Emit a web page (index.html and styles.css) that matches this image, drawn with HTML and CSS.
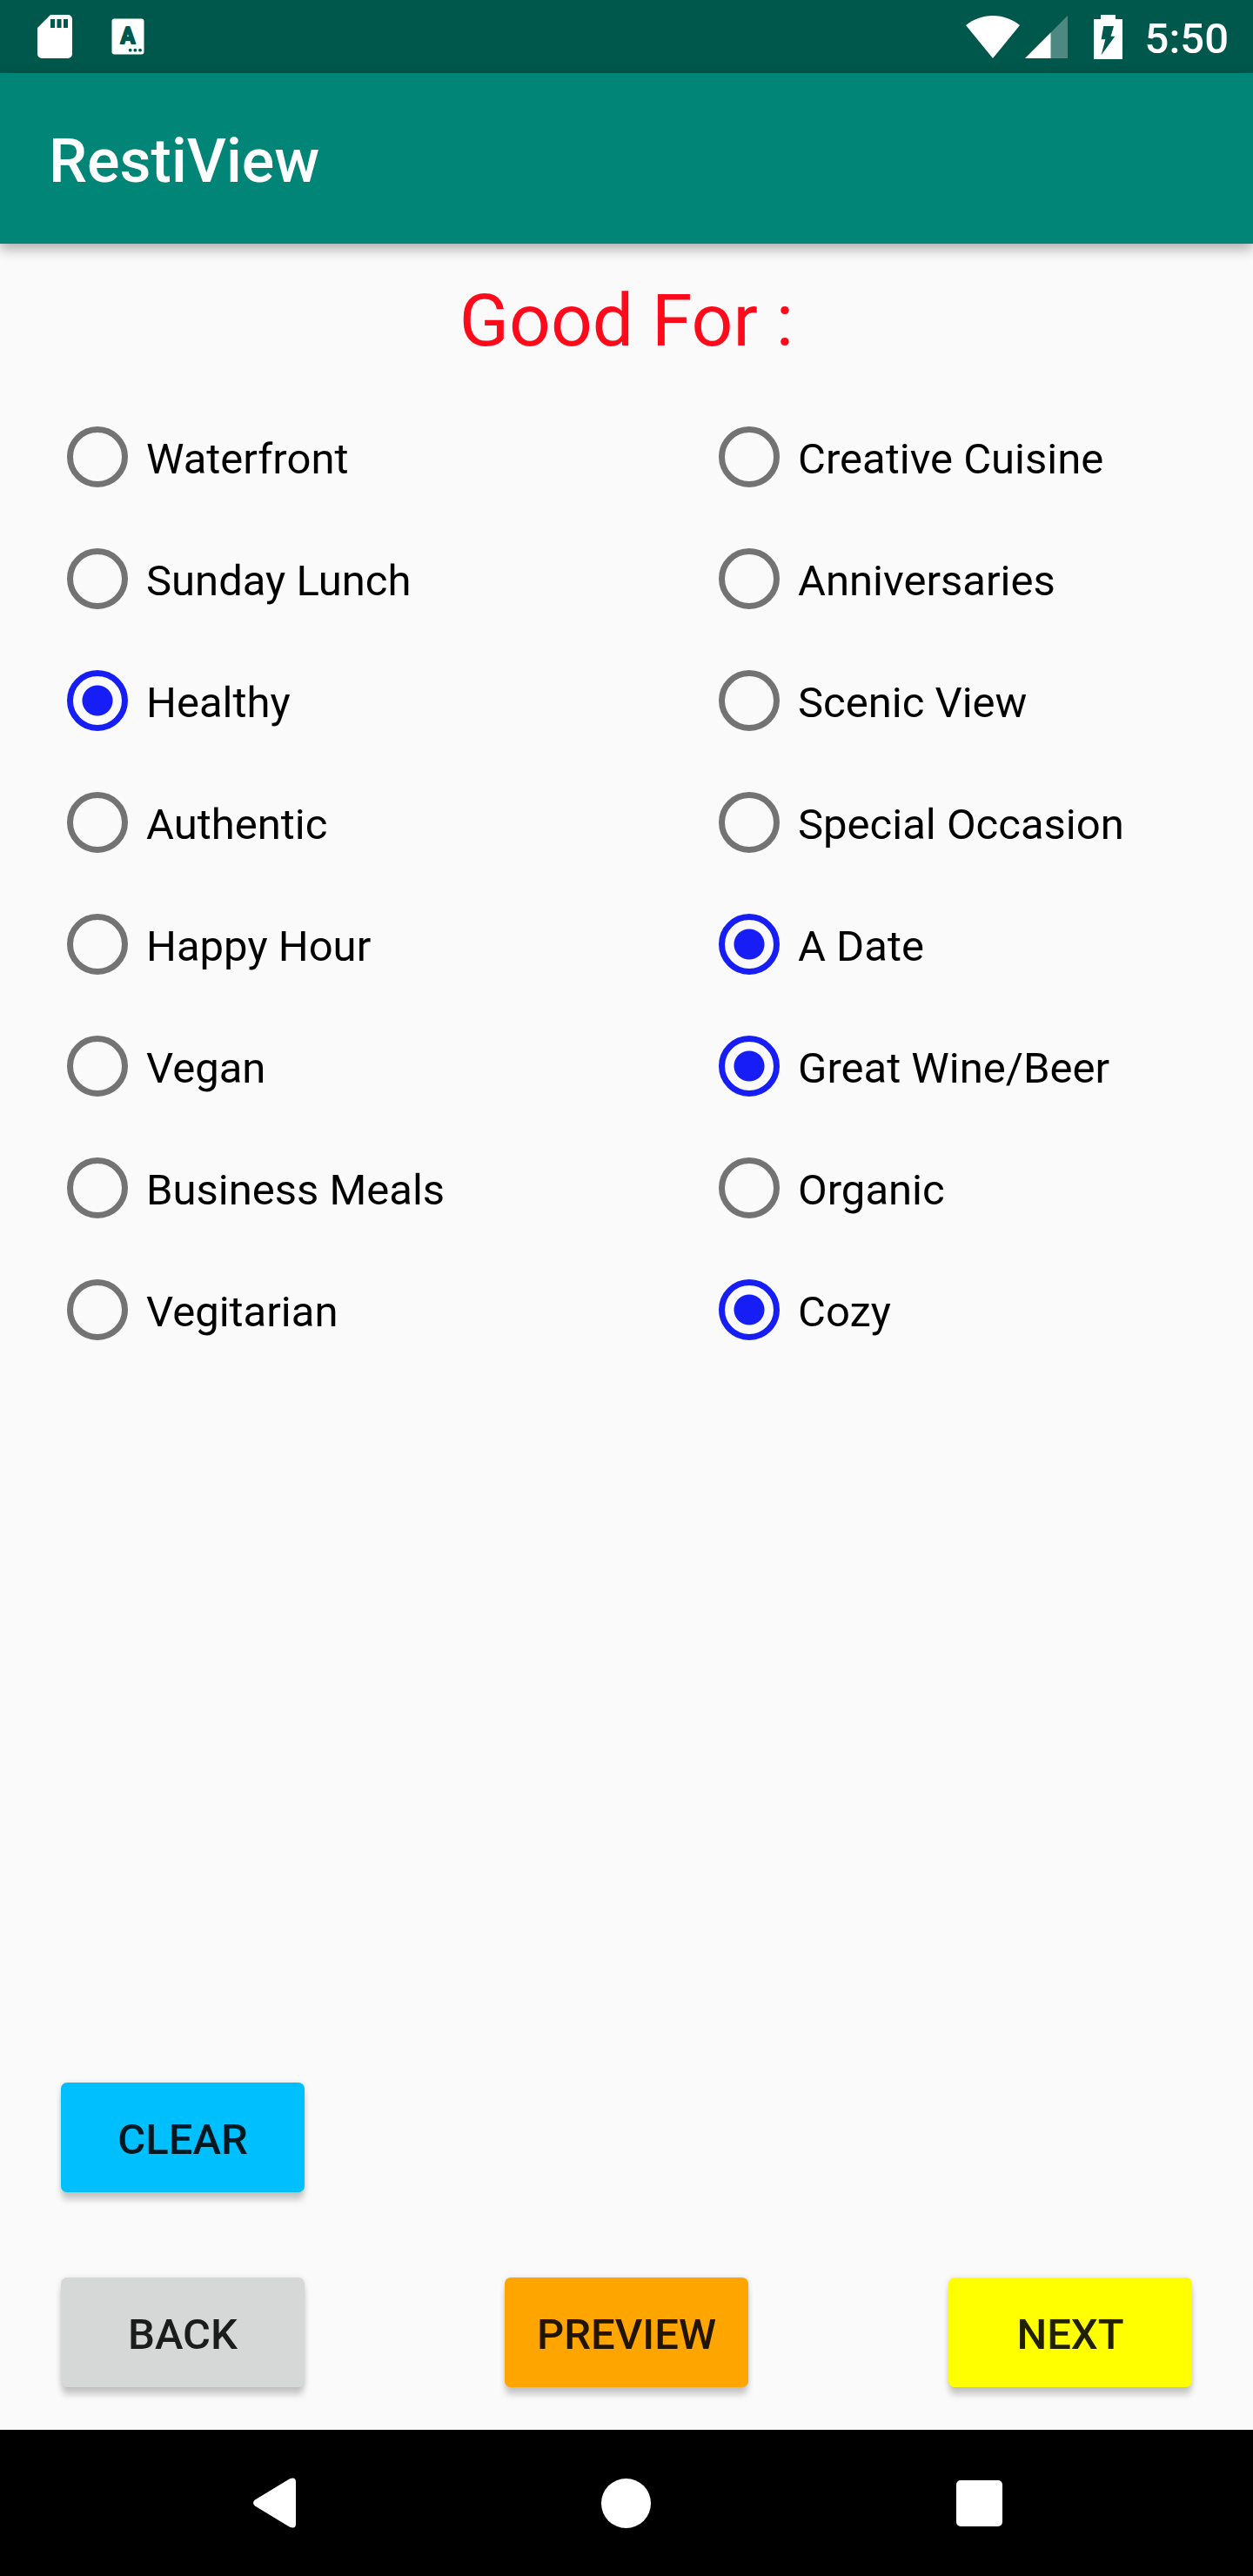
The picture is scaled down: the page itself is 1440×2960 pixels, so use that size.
FILE: index.html
```html
<!DOCTYPE html>
<html lang="en">
<head>
  <meta charset="UTF-8">
  <title>RestiView</title>
  <link rel="stylesheet" href="styles.css">
</head>
<body>
  <div class="status-bar">
    <div class="status-left">
      <svg class="icon-sd" width="40" height="50" viewBox="0 0 40 50">
        <path fill="#fff" fill-rule="evenodd" d="M15 0H35a5 5 0 0 1 5 5V45a5 5 0 0 1-5 5H5a5 5 0 0 1-5-5V15zM15 5v10h5V5zM22.500 5v10h5V5zM30 5v10h5V5z"/>
      </svg>
      <svg class="icon-lang" width="38" height="42" viewBox="0 0 38 42">
        <rect x=".5" y=".5" width="37" height="41" rx="3" fill="#fff"/>
        <text class="lang-letter" x="19" y="29" text-anchor="middle">A</text>
        <g fill="#00574b">
          <circle cx="21.700" cy="36.700" r="1.900"/>
          <circle cx="27.300" cy="36.700" r="1.900"/>
          <circle cx="33" cy="36.700" r="1.900"/>
        </g>
      </svg>
    </div>
    <div class="status-right">
      <svg class="icon-wifi" width="62" height="49" viewBox="0 0 62 49">
        <path fill="#fff" d="M31 49L0 11C9 4 19 0 31 0S53 4 62 11z"/>
      </svg>
      <svg class="icon-signal" width="49" height="49" viewBox="0 0 49 49">
        <path fill="#fff" fill-opacity=".3" d="M0 49L49 0V49z"/>
        <path fill="#fff" d="M0 49L29.500 19.500V49z"/>
      </svg>
      <svg class="icon-battery" width="33" height="51" viewBox="0 0 33 51">
        <path fill="#fff" fill-rule="evenodd" d="M8 0H25V5H33V51H0V5H8zM11.300 13L8.600 28.300H13.300L8.600 46.300L24.300 24.700H19.600L23 13z"/>
      </svg>
      <span class="clock">5:50</span>
    </div>
  </div>

  <div class="toolbar">
    <h1 class="title">RestiView</h1>
  </div>

  <div class="content">
    <h2 class="heading">Good For :</h2>

    <div class="options">
      <div class="column">
        <label class="option"><input type="radio" class="radio"><span>Waterfront</span></label>
        <label class="option"><input type="radio" class="radio"><span>Sunday Lunch</span></label>
        <label class="option"><input type="radio" class="radio" checked><span>Healthy</span></label>
        <label class="option"><input type="radio" class="radio"><span>Authentic</span></label>
        <label class="option"><input type="radio" class="radio"><span>Happy Hour</span></label>
        <label class="option"><input type="radio" class="radio"><span>Vegan</span></label>
        <label class="option"><input type="radio" class="radio"><span>Business Meals</span></label>
        <label class="option"><input type="radio" class="radio"><span>Vegitarian</span></label>
      </div>
      <div class="column">
        <label class="option"><input type="radio" class="radio"><span>Creative Cuisine</span></label>
        <label class="option"><input type="radio" class="radio"><span>Anniversaries</span></label>
        <label class="option"><input type="radio" class="radio"><span>Scenic View</span></label>
        <label class="option"><input type="radio" class="radio"><span>Special Occasion</span></label>
        <label class="option"><input type="radio" class="radio" checked><span>A Date</span></label>
        <label class="option"><input type="radio" class="radio" checked><span>Great Wine/Beer</span></label>
        <label class="option"><input type="radio" class="radio"><span>Organic</span></label>
        <label class="option"><input type="radio" class="radio" checked><span>Cozy</span></label>
      </div>
    </div>

    <div class="actions">
      <div class="button-row">
        <button class="button clear-button">CLEAR</button>
      </div>
      <div class="button-row">
        <button class="button back-button">BACK</button>
        <button class="button preview-button">PREVIEW</button>
        <button class="button next-button">NEXT</button>
      </div>
    </div>
  </div>

  <div class="nav-bar">
    <svg class="nav-back" width="49" height="58" viewBox="0 0 49 58">
      <path fill="#fff" d="M2 25.500L42 1.200Q49-1.500 49 5V53Q49 59.500 42 56.800L2 32.500Q-2 29 2 25.500z"/>
    </svg>
    <div class="nav-home"></div>
    <div class="nav-recent"></div>
  </div>
</body>
</html>
```
FILE: styles.css
```css
:root {
  --primary: #008577;
  --primary-dark: #00574b;
  --accent: #161ef5;
  --bg: #fafafa;
  --radio: #737373;
}

* {
  box-sizing: border-box;
}

body {
  width: 1440px;
  height: 2960px;
  margin: 0;
  display: flex;
  flex-direction: column;
  overflow: hidden;
  font-family: Roboto, 'Liberation Sans', sans-serif;
  background-color: var(--bg);
  color: #000;
}

svg {
  display: block;
}

.status-bar {
  height: 84px;
  padding: 0 28px 0 43px;
  display: flex;
  align-items: center;
  justify-content: space-between;
  background-color: var(--primary-dark);
}

.status-left,
.status-right {
  display: flex;
  align-items: center;
}

.status-left {
  gap: 45px;
}

.lang-letter {
  font-size: 25px;
  font-weight: 700;
  fill: var(--primary-dark);
  stroke: var(--primary-dark);
  stroke-width: 2px;
  stroke-linejoin: round;
}

.icon-signal {
  margin-left: 6px;
}

.icon-battery {
  margin: 0 26px 0 30px;
}

.clock {
  padding-top: 5px;
  font-size: 49px;
  font-weight: 500;
  color: #fff;
}

.toolbar {
  height: 196px;
  padding: 6px 56px 0;
  display: flex;
  align-items: center;
  background-color: var(--primary);
  box-shadow: 0 6px 14px rgba(0, 0, 0, 0.32);
}

.title {
  margin: 0;
  font-size: 70px;
  font-weight: 500;
  color: #fff;
}

.content {
  flex: 1;
  padding: 39px 70px 49px;
  display: flex;
  flex-direction: column;
}

.heading {
  margin: 0 0 37px;
  font-size: 84px;
  line-height: 99px;
  font-weight: 400;
  text-align: center;
  color: #ff0a1b;
}

.options {
  display: flex;
  padding-left: 7px;
}

.column {
  width: 749px;
}

.column:last-child {
  width: auto;
}

.option {
  height: 140px;
  display: flex;
  align-items: center;
  gap: 21px;
  font-size: 49px;
  white-space: nowrap;
}

.option span {
  padding-top: 5px;
}

.radio {
  appearance: none;
  width: 70px;
  height: 70px;
  margin: 0;
  border: 7px solid var(--radio);
  border-radius: 50%;
}

.radio:checked {
  border-color: var(--accent);
  background: radial-gradient(circle, var(--accent) 17px, transparent 18px);
}

.actions {
  margin-top: auto;
  display: flex;
  flex-direction: column;
  gap: 98px;
}

.button-row {
  display: flex;
  justify-content: space-between;
}

.button {
  width: 280px;
  height: 126px;
  padding: 5px 0 0;
  border: none;
  border-radius: 7px;
  font-family: inherit;
  font-size: 49px;
  font-weight: 500;
  color: rgba(0, 0, 0, 0.87);
  box-shadow: 0 10px 7px -1px rgba(0, 0, 0, 0.18), 0 1px 7px rgba(0, 0, 0, 0.12);
}

.clear-button {
  background-color: #00bfff;
}

.back-button {
  background-color: #d6d7d7;
}

.preview-button {
  background-color: #ffa500;
}

.next-button {
  background-color: #ffff00;
}

.nav-bar {
  height: 168px;
  padding: 0 288px 0 291px;
  display: flex;
  align-items: center;
  justify-content: space-between;
  background-color: #000;
}

.nav-home {
  width: 57px;
  height: 57px;
  border-radius: 50%;
  background-color: #fff;
}

.nav-recent {
  width: 53px;
  height: 53px;
  border-radius: 5px;
  background-color: #fff;
}
```
